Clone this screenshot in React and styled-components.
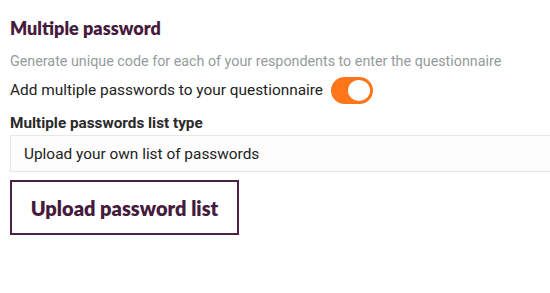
import React, { useState } from "react";
import styled, { createGlobalStyle } from "styled-components";

const GlobalStyle = createGlobalStyle`
  html, body {
    margin: 0;
    padding: 0;
    background: #ffffff;
    overflow: hidden;
  }
  body {
    font-family: Roboto, "Liberation Sans", sans-serif;
  }
`;

const Panel = styled.section`
  padding: 17px 0 0 10px;
  display: flex;
  flex-direction: column;
  margin-right: -60px;
`;

const Title = styled.h2`
  margin: 0;
  font-family: Lato, "Noto Sans", sans-serif;
  font-weight: 800;
  font-size: 18px;
  line-height: 22px;
  color: #451b3d;
`;

const Hint = styled.p`
  margin: 13px 0 0 0;
  font-size: 14.3px;
  line-height: 18px;
  color: #939c9c;
`;

const ToggleRow = styled.label`
  margin-top: 7px;
  display: flex;
  align-items: center;
  gap: 8px;
  font-size: 15.4px;
  line-height: 27px;
  color: #222222;
  cursor: pointer;
`;

const Switch = styled.button`
  position: relative;
  width: 42px;
  height: 27px;
  border: none;
  padding: 0;
  border-radius: 14px;
  background: ${(p) => (p.$on ? "#ff7519" : "#cccccc")};
  cursor: pointer;
  &::after {
    content: "";
    position: absolute;
    top: 3px;
    left: ${(p) => (p.$on ? "17px" : "3px")};
    width: 22px;
    height: 21px;
    border-radius: 50%;
    background: #ffffff;
  }
`;

const FieldLabel = styled.div`
  margin-top: 10px;
  font-size: 15.3px;
  font-weight: 700;
  line-height: 18px;
  color: #2a2a2a;
`;

const Select = styled.div`
  margin-top: 3px;
  height: 35px;
  display: flex;
  align-items: center;
  padding-left: 13px;
  border: 1px solid #e6e6e6;
  background: #fdfdfd;
  font-size: 15.4px;
  color: #222222;
`;

const UploadButton = styled.button`
  margin-top: 8px;
  align-self: flex-start;
  width: 229px;
  height: 55px;
  border: 2px solid #4b2243;
  background: #ffffff;
  font-family: Lato, "Noto Sans", sans-serif;
  font-weight: 800;
  font-size: 20px;
  color: #451b3d;
  cursor: pointer;
`;

export default function App() {
  const [on, setOn] = useState(true);
  return (
    <>
      <GlobalStyle />
      <Panel>
        <Title>Multiple password</Title>
        <Hint>
          Generate unique code for each of your respondents to enter the
          questionnaire
        </Hint>
        <ToggleRow>
          Add multiple passwords to your questionnaire
          <Switch $on={on} onClick={() => setOn(!on)} aria-pressed={on} />
        </ToggleRow>
        <FieldLabel>Multiple passwords list type</FieldLabel>
        <Select>Upload your own list of passwords</Select>
        <UploadButton>Upload password list</UploadButton>
      </Panel>
    </>
  );
}
